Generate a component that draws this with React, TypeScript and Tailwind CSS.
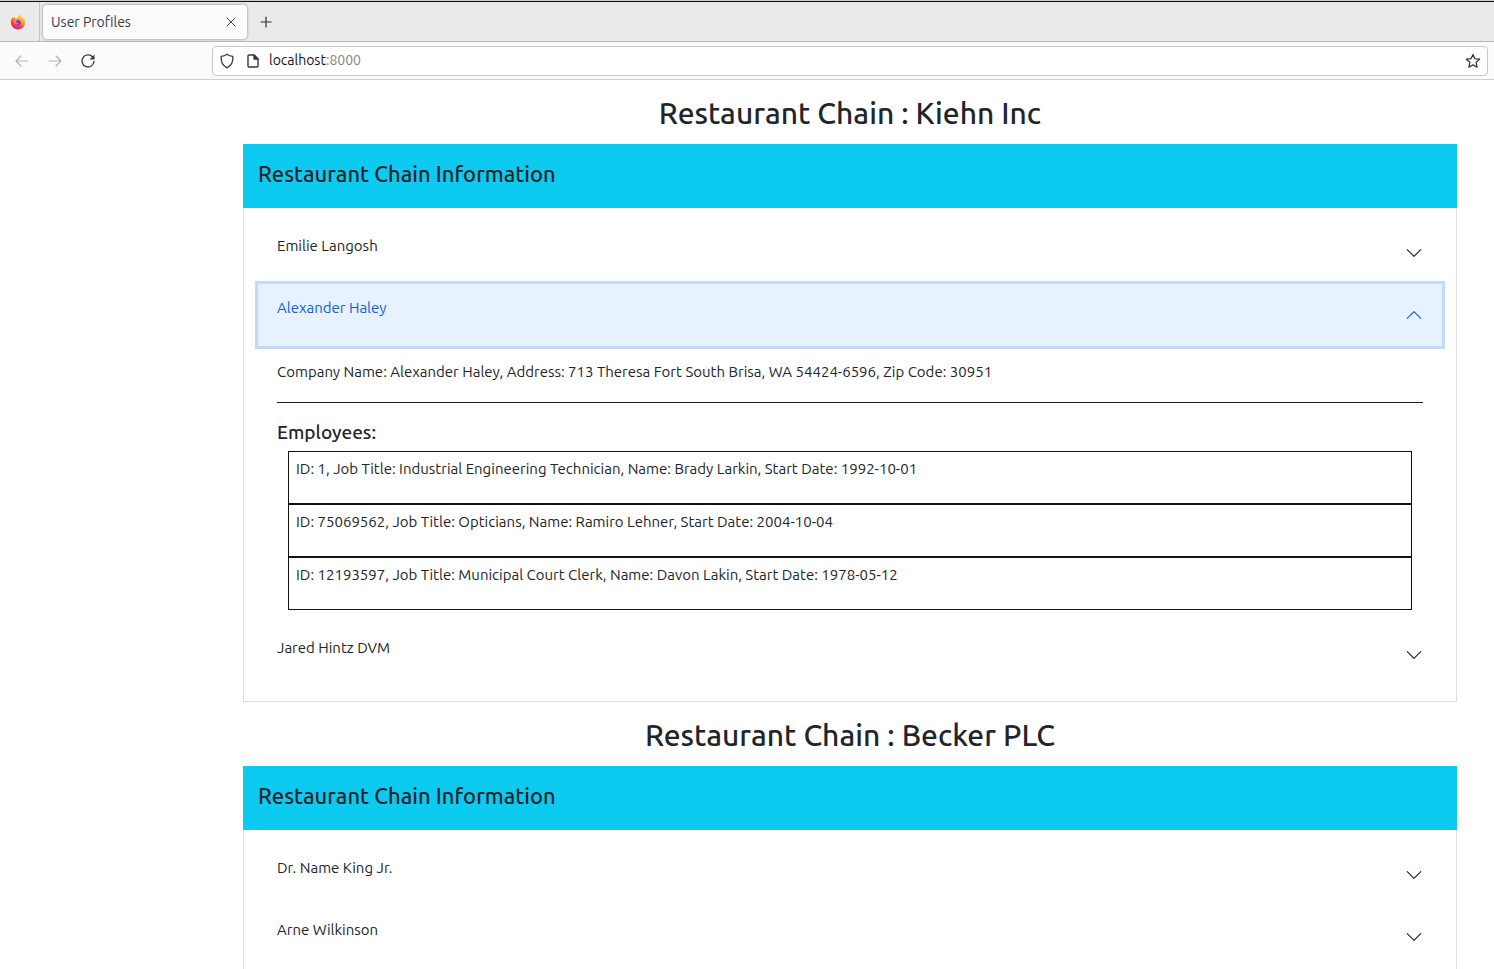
import { useState } from "react";

type Employee = { id: number; jobTitle: string; name: string; startDate: string };
type Location = { name: string; address?: string; zip?: string; employees?: Employee[] };
type Chain = { name: string; locations: Location[] };

const chains: Chain[] = [
  {
    name: "Kiehn Inc",
    locations: [
      { name: "Emilie Langosh" },
      {
        name: "Alexander Haley",
        address: "713 Theresa Fort South Brisa, WA 54424-6596",
        zip: "30951",
        employees: [
          { id: 1, jobTitle: "Industrial Engineering Technician", name: "Brady Larkin", startDate: "1992-10-01" },
          { id: 75069562, jobTitle: "Opticians", name: "Ramiro Lehner", startDate: "2004-10-04" },
          { id: 12193597, jobTitle: "Municipal Court Clerk", name: "Davon Lakin", startDate: "1978-05-12" },
        ],
      },
      { name: "Jared Hintz DVM" },
    ],
  },
  { name: "Becker PLC", locations: [{ name: "Dr. Name King Jr." }, { name: "Arne Wilkinson" }] },
];

function FirefoxLogo() {
  return (
    <svg width="16" height="16" viewBox="0 0 16 16" aria-hidden="true">
      <defs>
        <linearGradient id="flame" x1="0.85" y1="0.05" x2="0.3" y2="1">
          <stop offset="0" stopColor="#fff44f" />
          <stop offset="0.4" stopColor="#ff9a2a" />
          <stop offset="0.7" stopColor="#ff3d47" />
          <stop offset="1" stopColor="#f0148c" />
        </linearGradient>
      </defs>
      <path
        d="M10 .5c.2 1.200 1 1.900 1.900 2.700.5.400.8.900 1 1.300l.1-1c1.300 1.300 2.200 3.200 2.200 5A7.200 7 0 0 1 .8 8.500C.8 6.500 1.600 4.400 2.900 3l.2 1.300L4.500 3l.5 1.400c.9-.2 1.700 0 2.300.4C7.300 3 8.400 1.300 10 .5z"
        fill="url(#flame)"
      />
      <circle cx="8" cy="8.300" r="2.900" fill="#7542e5" />
      <path d="M3.800 5.600c1.500-.8 3.200-.4 4 .8-1.300 0-1.400.8-2 1.100 0 1.500 1.500 2.300 3 1.700-.8 1.700-3.900 1.500-5-.6z" fill="#ff8a2c" />
      <path d="M8.200 4.500c2 .2 3.200 1.500 3.300 3.200-.7-1.100-1.700-1.500-2.700-1.400z" fill="#ffb52e" />
    </svg>
  );
}

function BackArrow({ className = "" }: { className?: string }) {
  return (
    <svg className={className} width="16" height="16" viewBox="0 0 16 16" fill="none" stroke="currentColor" strokeWidth="1.200" strokeLinecap="round" strokeLinejoin="round" aria-hidden="true">
      <path d="M14 8H2M7 3 2 8l5 5" />
    </svg>
  );
}

function Chevron({ open }: { open: boolean }) {
  return (
    <svg className={open ? "shrink-0 rotate-180" : "shrink-0"} width="18" height="18" viewBox="0 0 16 16" fill="currentColor" aria-hidden="true">
      <path fillRule="evenodd" d="M1.646 4.646a.5.5 0 0 1 .708 0L8 10.293l5.646-5.647a.5.5 0 0 1 .708.708l-6 6a.5.5 0 0 1-.708 0l-6-6a.5.5 0 0 1 0-.708z" />
    </svg>
  );
}

function BrowserBar() {
  return (
    <header className="shrink-0 text-[#15141a]">
      <div className="flex h-[42px] items-stretch border-t border-b border-t-[#c8cec6] border-b-[#b9b9b9] bg-[#eaeaea]">
        <div className="flex grow border-t border-[#111]">
          <div className="flex w-10 shrink-0 items-center justify-center border-r border-[#c4c4c4] pr-1">
            <FirefoxLogo />
          </div>
          <div className="mx-[3px] mt-[3px] mb-[2px] flex w-[204px] items-center justify-between rounded bg-[#fbfbfb] pr-2 pl-2 shadow-[0_0_3px_rgba(0,0,0,0.45)]">
            <span className="text-[14px] text-[#3a3944]">User Profiles</span>
            <button aria-label="Close tab" className="flex size-4 items-center justify-center text-[#4a4a4f]">
              <svg width="10" height="10" viewBox="0 0 10 10" stroke="currentColor" strokeWidth="1" strokeLinecap="round"><path d="m1 1 8 8M9 1 1 9" /></svg>
            </button>
          </div>
          <button aria-label="New tab" className="flex w-8 items-center justify-center text-[#2f2f35]">
            <svg width="12" height="12" viewBox="0 0 12 12" stroke="currentColor" strokeWidth="1.200" strokeLinecap="round"><path d="M6 1v10M1 6h10" /></svg>
          </button>
        </div>
      </div>
      <div className="flex h-[38px] items-center border-b border-[#cfcfcf] bg-[#fbfbfb] pr-[6px] pl-[14px]">
        <div className="flex w-[198px] shrink-0 items-center gap-[17px]">
          <button aria-label="Back" className="text-[#b3b3b6]"><BackArrow /></button>
          <button aria-label="Forward" className="text-[#b3b3b6]"><BackArrow className="rotate-180" /></button>
          <button aria-label="Reload" className="text-[#38373f]">
            <svg width="16" height="16" viewBox="0 0 16 16" fill="none" stroke="currentColor" strokeWidth="1.300" strokeLinecap="round" aria-hidden="true">
              <path d="M12.700 4.200A6 6 0 1 0 14 8.400" />
              <path d="M14.500 1.500v5h-5z" fill="currentColor" stroke="none" />
            </svg>
          </button>
        </div>
        <div className="flex h-[30px] grow items-center rounded border border-[#c9c9cc] bg-white px-[6px]">
          <svg className="shrink-0" width="16" height="16" viewBox="0 0 16 16" fill="none" stroke="#38373f" strokeWidth="1.300" strokeLinejoin="round" aria-hidden="true">
            <path d="M8 1.200c1.600 1.300 3.600 2 5.800 2.200C14.300 8.300 12 12.800 8 14.800 4 12.800 1.700 8.300 2.200 3.400 4.400 3.200 6.400 2.500 8 1.200z" />
          </svg>
          <svg className="ml-[10px] shrink-0" width="16" height="16" viewBox="0 0 16 16" fill="none" stroke="#38373f" strokeWidth="1.400" strokeLinejoin="round" aria-hidden="true">
            <path d="M4 2h5l4 4v7a1 1 0 0 1-1 1H4a1 1 0 0 1-1-1V3a1 1 0 0 1 1-1z" />
            <path d="M9 2v4h4z" fill="#38373f" />
          </svg>
          <a href="#top" className="ml-2 grow text-[14px] text-[#15141a]">
            localhost<span className="text-[#85848a]">:8000</span>
          </a>
          <button aria-label="Bookmark this page" className="text-[#38373f]">
            <svg width="16" height="16" viewBox="0 0 16 16" fill="none" stroke="currentColor" strokeWidth="1.300" strokeLinejoin="round" aria-hidden="true">
              <path d="m8 1.500 1.900 4.200 4.700.5-3.500 3.100 1 4.900L8 11.900l-4.100 2.300 1-4.900L1.400 6.200l4.700-.5z" />
            </svg>
          </button>
        </div>
      </div>
    </header>
  );
}

function LocationItem({ location }: { location: Location }) {
  const [open, setOpen] = useState(Boolean(location.employees));
  return (
    <div>
      <button
        aria-expanded={open}
        onClick={() => setOpen(!open)}
        className={
          open
            ? "relative flex h-[62px] w-full items-center justify-between bg-[#e7f1ff] px-[19px] text-left text-[#0c63e4] ring-3 ring-[#c0dafd]"
            : "flex h-[62px] w-full items-center justify-between px-[19px] text-left"
        }
      >
        <span className="pb-[14px]">{location.name}</span>
        <Chevron open={open} />
      </button>
      {open && location.employees && (
        <div className="px-[19px] pt-[14px] pb-[14px]">
          <p>Company Name: {location.name}, Address: {location.address}, Zip Code: {location.zip}</p>
          <hr className="mt-[18px] mb-[18px] border-t border-[#1c1c1c]" />
          <h3 className="mb-2 text-[19px] leading-[22px] font-medium">Employees:</h3>
          <ul className="mx-[11px]">
            {location.employees.map((e) => (
              <li key={e.id} className="h-[53px] border border-[#111] px-[7px] pt-[5px]">
                ID: {e.id}, Job Title: {e.jobTitle}, Name: {e.name}, Start Date: {e.startDate}
              </li>
            ))}
          </ul>
        </div>
      )}
    </div>
  );
}

export default function App() {
  return (
    <div id="top" className="flex h-screen flex-col overflow-hidden bg-white font-['Ubuntu','Noto_Sans',sans-serif]">
      <BrowserBar />
      <main className="min-h-0 grow overflow-y-auto pr-[37px] pl-[243px] text-[15px] leading-6 text-[#212529] [scrollbar-width:none]">
        {chains.map((chain) => (
          <section key={chain.name}>
            <h1 className="pt-[15px] pb-[13px] text-center text-[30px] leading-9 font-medium">Restaurant Chain : {chain.name}</h1>
            <div className="border border-[#dedede]">
              <h2 className="-mx-px -mt-px h-16 bg-[#0dcaf0] px-[15px] pt-[15px] text-[22px] leading-[30px] font-medium">Restaurant Chain Information</h2>
              <div className="px-[14px] pt-[14px] pb-[15px]">
                {chain.locations.map((location) => (
                  <LocationItem key={location.name} location={location} />
                ))}
              </div>
            </div>
          </section>
        ))}
      </main>
    </div>
  );
}
